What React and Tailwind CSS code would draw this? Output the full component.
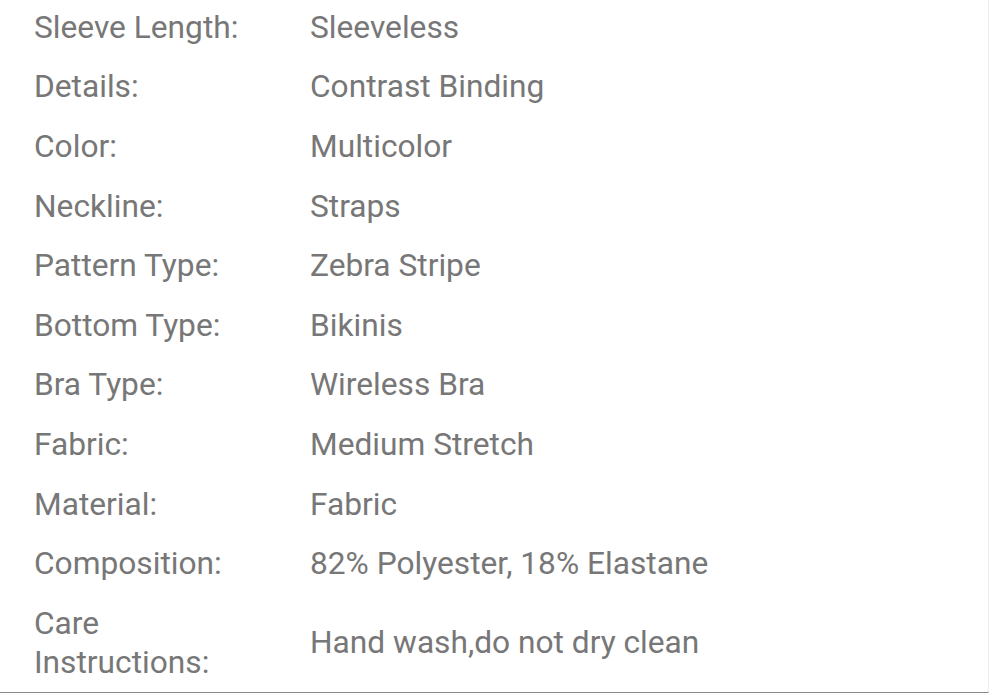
const SPECS = [
  ['Sleeve Length:', 'Sleeveless'],
  ['Details:', 'Contrast Binding'],
  ['Color:', 'Multicolor'],
  ['Neckline:', 'Straps'],
  ['Pattern Type:', 'Zebra Stripe'],
  ['Bottom Type:', 'Bikinis'],
  ['Bra Type:', 'Wireless Bra'],
  ['Fabric:', 'Medium Stretch'],
  ['Material:', 'Fabric'],
  ['Composition:', '82% Polyester, 18% Elastane'],
  ['Care Instructions:', 'Hand wash,do not dry clean']
]

function App() {
  return (
    <div className="w-[989px] h-[693px] overflow-hidden bg-white" style={{ fontFamily: 'Roboto, "Noto Sans", sans-serif' }}>
      <div className="-mt-[5px] h-[698px] border-r border-b border-r-[#ececec] border-b-[#8a8a8a] flex flex-col justify-end">
        {SPECS.map(([label, value]) => (
          <div key={label} className="flex items-center py-[10.3px] text-[31.7px] leading-[39px] text-[#777777]">
            <div className="w-[310px] shrink-0 pl-[34px] pr-[60px]">{label}</div>
            <div className="flex-1">{value}</div>
          </div>
        ))}
      </div>
    </div>
  )
}

export default App
